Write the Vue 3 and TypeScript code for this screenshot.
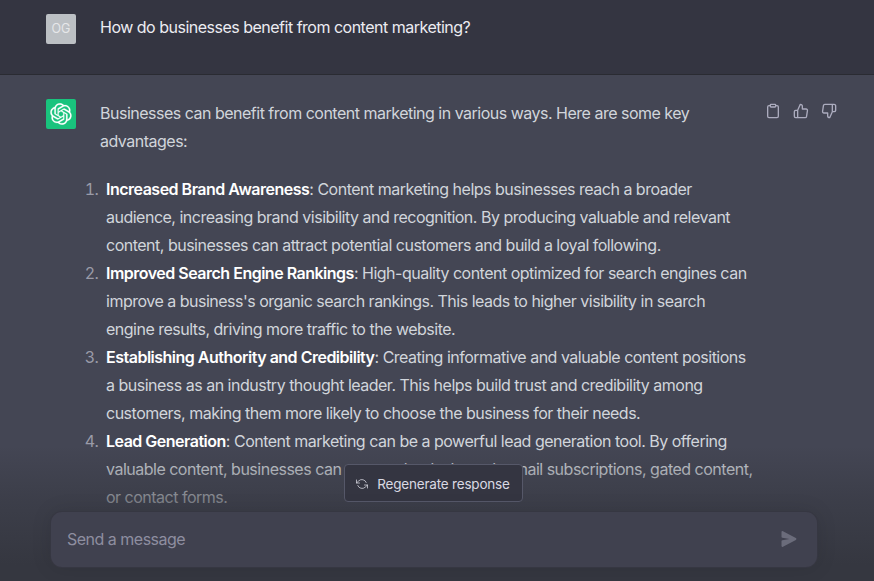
<script setup lang="ts">
interface Point {
  title: string
  text: string
}

const points: Point[] = [
  {
    title: 'Increased Brand Awareness',
    text: ': Content marketing helps businesses reach a broader audience, increasing brand visibility and recognition. By producing valuable and relevant content, businesses can attract potential customers and build a loyal following.',
  },
  {
    title: 'Improved Search Engine Rankings',
    text: ": High-quality content optimized for search engines can improve a business's organic search rankings. This leads to higher visibility in search engine results, driving more traffic to the website.",
  },
  {
    title: 'Establishing Authority and Credibility',
    text: ': Creating informative and valuable content positions a business as an industry thought leader. This helps build trust and credibility among customers, making them more likely to choose the business for their needs.',
  },
  {
    title: 'Lead Generation',
    text: ': Content marketing can be a powerful lead generation tool. By offering valuable content, businesses can capture leads through email subscriptions, gated content, or contact forms.',
  },
]
</script>

<template>
  <div class="page">
    <div class="thread">
      <div class="row user">
        <div class="avatar og">OG</div>
        <div class="question">How do businesses benefit from content marketing?</div>
      </div>

      <div class="row bot">
        <div class="avatar gpt">
          <svg width="22" height="22" viewBox="0 0 41 41" fill="none">
            <path fill="currentColor" stroke="currentColor" stroke-width="0.4" d="M37.5324 16.8707C37.9808 15.5241 38.1363 14.0974 37.9886 12.6859C37.8409 11.2744 37.3934 9.91076 36.676 8.68622C35.6126 6.83404 33.9882 5.3676 32.0373 4.4985C30.0864 3.62941 27.9098 3.40259 25.8215 3.85078C24.8796 2.7893 23.7219 1.94125 22.4257 1.36341C21.1295 0.785575 19.7249 0.491269 18.3058 0.500197C16.1708 0.495044 14.0893 1.16803 12.3614 2.42214C10.6335 3.67624 9.34853 5.44666 8.6917 7.47815C7.30085 7.76286 5.98686 8.3414 4.8377 9.17505C3.68854 10.0087 2.73073 11.0782 2.02839 12.312C0.956464 14.1591 0.498905 16.2988 0.721698 18.4228C0.944492 20.5467 1.83612 22.5449 3.268 24.1293C2.81966 25.4759 2.66413 26.9026 2.81182 28.3141C2.95951 29.7256 3.40701 31.0892 4.12437 32.3138C5.18791 34.1659 6.8123 35.6322 8.76321 36.5013C10.7141 37.3704 12.8907 37.5973 14.9789 37.1492C15.9208 38.2107 17.0786 39.0587 18.3747 39.6366C19.6709 40.2144 21.0755 40.5087 22.4946 40.4998C24.6307 40.5054 26.7133 39.8321 28.4418 38.5772C30.1704 37.3223 31.4556 35.5506 32.1119 33.5179C33.5027 33.2332 34.8167 32.6547 35.9659 31.821C37.115 30.9874 38.0728 29.9178 38.7752 28.684C39.8458 26.8371 40.3023 24.6979 40.0789 22.5748C39.8556 20.4517 38.9639 18.4544 37.5324 16.8707ZM22.4978 37.8849C20.7443 37.8874 19.0459 37.2733 17.6994 36.1501C17.7601 36.117 17.8666 36.0586 17.936 36.0161L25.9004 31.4156C26.1003 31.3019 26.2663 31.137 26.3813 30.9378C26.4964 30.7386 26.5563 30.5124 26.5549 30.2825V19.0542L29.9213 20.998C29.9389 21.0068 29.9541 21.0198 29.9656 21.0359C29.977 21.052 29.9842 21.0707 29.9867 21.0902V30.3889C29.9842 32.375 29.1946 34.2791 27.7909 35.6841C26.3872 37.0892 24.4838 37.8806 22.4978 37.8849ZM6.39227 31.0064C5.51397 29.4888 5.19742 27.7107 5.49804 25.9832C5.55718 26.0187 5.66048 26.0818 5.73461 26.1244L13.699 30.7248C13.8975 30.8408 14.1233 30.902 14.3532 30.902C14.583 30.902 14.8088 30.8408 15.0073 30.7248L24.731 25.1103V28.9979C24.7321 29.0177 24.7283 29.0376 24.7199 29.0556C24.7115 29.0736 24.6988 29.0893 24.6829 29.1012L16.6317 33.7497C14.9096 34.7416 12.8643 35.0097 10.9447 34.4954C9.02506 33.9811 7.38785 32.7263 6.39227 31.0064ZM4.29707 13.6194C5.17156 12.0998 6.55279 10.9364 8.19885 10.3327C8.19885 10.4013 8.19491 10.5228 8.19491 10.6071V19.808C8.19351 20.0378 8.25334 20.2638 8.36823 20.4629C8.48312 20.6619 8.64893 20.8267 8.84863 20.9404L18.5723 26.5542L15.206 28.4979C15.1894 28.5089 15.1703 28.5155 15.1505 28.5173C15.1307 28.5191 15.1107 28.516 15.0924 28.5082L7.04046 23.8557C5.32135 22.8601 4.06716 21.2235 3.55289 19.3046C3.03862 17.3858 3.30624 15.3413 4.29707 13.6194ZM31.955 20.0556L22.2312 14.4411L25.5976 12.4981C25.6142 12.4872 25.6333 12.4805 25.6531 12.4787C25.6729 12.4769 25.6928 12.4801 25.7111 12.4879L33.7631 17.1364C34.9967 17.849 36.0017 18.8982 36.6606 20.1613C37.3194 21.4244 37.6047 22.849 37.4832 24.2684C37.3617 25.6878 36.8382 27.0432 35.9743 28.1759C35.1103 29.3086 33.9415 30.1717 32.6047 30.6641C32.6047 30.5947 32.6047 30.4733 32.6047 30.3889V21.188C32.6066 20.9586 32.5474 20.7328 32.4332 20.5338C32.319 20.3348 32.154 20.1698 31.955 20.0556ZM35.3055 15.0128C35.2464 14.9765 35.1431 14.9142 35.069 14.8717L27.1045 10.2712C26.906 10.1554 26.6803 10.0943 26.4504 10.0943C26.2206 10.0943 25.9948 10.1554 25.7963 10.2712L16.0726 15.8858V11.9982C16.0715 11.9783 16.0753 11.9585 16.0837 11.9405C16.0921 11.9225 16.1048 11.9068 16.1207 11.8949L24.1719 7.25025C25.4053 6.53903 26.8158 6.19376 28.2383 6.25482C29.6608 6.31589 31.0364 6.78077 32.2044 7.59508C33.3723 8.40939 34.2842 9.53945 34.8334 10.8531C35.3826 12.1667 35.5464 13.6095 35.3055 15.0128ZM14.2424 21.9419L10.8752 19.9981C10.8576 19.9893 10.8423 19.9763 10.8309 19.9602C10.8195 19.9441 10.8122 19.9254 10.8098 19.9058V10.6071C10.8107 9.18295 11.2173 7.78848 11.9819 6.58696C12.7466 5.38544 13.8377 4.42659 15.1275 3.82264C16.4173 3.21869 17.8524 2.99464 19.2649 3.1767C20.6775 3.35876 22.0089 3.93941 23.1034 4.85067C23.0427 4.88379 22.937 4.94215 22.8668 4.98473L14.9024 9.58517C14.7025 9.69878 14.5366 9.86356 14.4215 10.0626C14.3065 10.2616 14.2466 10.4877 14.2479 10.7175L14.2424 21.9419ZM16.071 17.9991L20.4018 15.4978L24.7325 17.9975V22.9985L20.4018 25.4983L16.071 22.9985V17.9991Z" />
          </svg>
        </div>
        <div class="answer">
          <p>Businesses can benefit from content marketing in various ways. Here are some key advantages:</p>
          <ol>
            <li v-for="p in points" :key="p.title"><strong>{{ p.title }}</strong>{{ p.text }}</li>
          </ol>
        </div>
        <div class="actions">
          <button class="act">
            <svg viewBox="0 0 24 24" width="16" height="16" fill="none" stroke="currentColor" stroke-width="2" stroke-linecap="round" stroke-linejoin="round">
              <path d="M16 4h2a2 2 0 0 1 2 2v14a2 2 0 0 1-2 2H6a2 2 0 0 1-2-2V6a2 2 0 0 1 2-2h2" />
              <rect x="8" y="2" width="8" height="4" rx="1" ry="1" />
            </svg>
          </button>
          <button class="act">
            <svg viewBox="0 0 24 24" width="16" height="16" fill="none" stroke="currentColor" stroke-width="2" stroke-linecap="round" stroke-linejoin="round">
              <path d="M14 9V5a3 3 0 0 0-3-3l-4 9v11h11.28a2 2 0 0 0 2-1.7l1.38-9a2 2 0 0 0-2-2.3zM7 22H4a2 2 0 0 1-2-2v-7a2 2 0 0 1 2-2h3" />
            </svg>
          </button>
          <button class="act">
            <svg viewBox="0 0 24 24" width="16" height="16" fill="none" stroke="currentColor" stroke-width="2" stroke-linecap="round" stroke-linejoin="round">
              <path d="M10 15v4a3 3 0 0 0 3 3l4-9V2H5.72a2 2 0 0 0-2 1.7l-1.38 9a2 2 0 0 0 2 2.3zm7-13h2.67A2.31 2.31 0 0 1 22 4v7a2.31 2.31 0 0 1-2.33 2H17" />
            </svg>
          </button>
        </div>
      </div>
    </div>

    <div class="composer">
      <button class="regen">
        <svg viewBox="0 0 24 24" width="12" height="12" fill="none" stroke="currentColor" stroke-width="1.5" stroke-linecap="round" stroke-linejoin="round">
          <polyline points="1 4 1 10 7 10" />
          <polyline points="23 20 23 14 17 14" />
          <path d="M20.49 9A9 9 0 0 0 5.64 5.64L1 10m22 4l-4.64 4.36A9 9 0 0 1 3.51 15" />
        </svg>
        Regenerate response
      </button>
      <div class="input">
        <span class="placeholder">Send a message</span>
        <svg class="send" viewBox="0 0 16 16" width="16" height="16" fill="currentColor">
          <path d="M.5 1.163A1 1 0 0 1 1.97.28l12.868 6.837a1 1 0 0 1 0 1.766L1.969 15.72A1 1 0 0 1 .5 14.836V10.33a1 1 0 0 1 .816-.983L8.5 8 1.316 6.653A1 1 0 0 1 .5 5.67V1.163Z" />
        </svg>
      </div>
    </div>
  </div>
</template>

<style>
html,
body {
  margin: 0;
  background: #343541;
}
</style>

<style scoped>
.page {
  position: relative;
  width: 874px;
  height: 581px;
  overflow: hidden;
  background: #444654;
  font-family: Inter, "Liberation Sans", sans-serif;
  font-size: 16px;
  line-height: 28px;
  letter-spacing: -0.5px;
}
.thread {
  margin-top: -10px;
}
.row {
  display: flex;
  padding-left: 46px;
}
.user {
  background: #343541;
  height: 85px;
  padding-top: 24px;
  box-sizing: border-box;
  gap: 24px;
  border-bottom: 1px solid rgba(32, 33, 35, 0.5);
}
.bot {
  padding-top: 24px;
}
.avatar {
  flex: none;
  width: 30px;
  height: 30px;
  border-radius: 2px;
  display: flex;
  align-items: center;
  justify-content: center;
}
.og {
  background: #bcc0c4;
  color: #e6e7e9;
  font-size: 12.5px;
  letter-spacing: 0;
}
.gpt {
  background: #19c37d;
  color: #fff;
}
.question {
  color: #ececf1;
  margin-top: -1px;
}
.answer {
  width: 655px;
  flex: none;
  color: #d1d5db;
  margin-left: 24px;
}
.answer p {
  margin: 0 0 20px;
}
.answer ol {
  margin: 0;
  padding: 0 0 0 6px;
}
.answer li::marker {
  content: counter(list-item) ".  ";
  color: #9a9ba8;
}
.answer strong {
  color: #fff;
  font-weight: 600;
}
.actions {
  display: flex;
  gap: 8px;
  margin-left: 8px;
  margin-top: 2px;
  height: 20px;
}
.act {
  background: none;
  border: 0;
  padding: 2px;
  width: 20px;
  height: 20px;
  color: #acacbe;
  display: flex;
  align-items: center;
  justify-content: center;
}
.composer {
  position: absolute;
  left: 0;
  right: 0;
  bottom: 0;
  height: 135px;
  box-sizing: border-box;
  padding-top: 18px;
  display: flex;
  flex-direction: column;
  align-items: center;
  background-image: linear-gradient(180deg, rgba(53, 55, 64, 0), rgba(53, 55, 64, 0.5) 38%, #353740 88%);
}
.regen {
  margin-left: -8px;
  height: 38px;
  width: 179px;
  box-sizing: border-box;
  display: flex;
  align-items: center;
  justify-content: center;
  gap: 9px;
  padding: 1px 0 0;
  background: #343541;
  border: 1px solid rgba(86, 88, 105, 1);
  border-radius: 4px;
  color: #d9d9e3;
  font: inherit;
  font-size: 13.5px;
  line-height: 20px;
  letter-spacing: -0.2px;
}
.input {
  margin: 9px 0 0 -6px;
  width: 768px;
  height: 57px;
  box-sizing: border-box;
  display: flex;
  align-items: center;
  justify-content: space-between;
  padding: 0 20px 2px 16px;
  background: #40414f;
  border: 1px solid rgba(32, 33, 35, 0.3);
  border-radius: 12px;
  box-shadow: 0 0 20px rgba(0, 0, 0, 0.1);
}
.placeholder {
  color: #8e8ea0;
}
.send {
  color: #6b6c7b;
}
</style>
